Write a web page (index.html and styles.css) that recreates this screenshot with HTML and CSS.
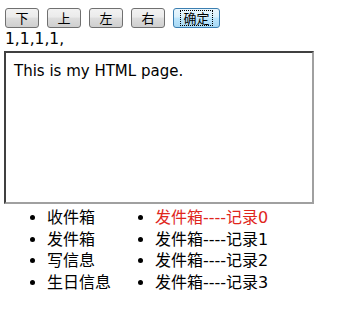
FILE: index.html
```html
<!DOCTYPE html>
<html lang="zh">
<head>
    <meta charset="UTF-8">
    <title>My HTML page</title>
    <link rel="stylesheet" href="styles.css">
</head>
<body>
    <div class="toolbar">
        <button class="btn">下</button>
        <button class="btn">上</button>
        <button class="btn">左</button>
        <button class="btn">右</button>
        <button class="btn btn-ok"><span>确定</span></button>
    </div>
    <div class="output">1,1,1,1,</div>
    <div class="content">This is my HTML page.</div>
    <div class="lists">
        <ul class="menu">
            <li>收件箱</li>
            <li>发件箱</li>
            <li>写信息</li>
            <li>生日信息</li>
        </ul>
        <ul class="records">
            <li><span class="active">发件箱----记录0</span></li>
            <li>发件箱----记录1</li>
            <li>发件箱----记录2</li>
            <li>发件箱----记录3</li>
        </ul>
    </div>
</body>
</html>
```

FILE: styles.css
```css
body {
    margin: 0;
    padding: 8px 4px;
    font-family: "DejaVu Sans", "Noto Sans CJK SC", sans-serif;
    font-size: 15px;
    color: #000;
    background: #fff;
}
.toolbar {
    display: flex;
    gap: 8px;
    padding-left: 1px;
}
.btn {
    width: 34px;
    height: 20px;
    padding: 0;
    border: 1px solid #707070;
    border-radius: 3px;
    background: linear-gradient(#f2f2f2, #ebebeb 45%, #dddddd 50%, #cfcfcf);
    font-family: "Noto Sans CJK SC", sans-serif;
    font-size: 13px;
    line-height: 16px;
    color: #000;
}
.btn-ok {
    width: 47px;
    border-color: #3c7fb1;
    background: linear-gradient(#eaf6fd, #d9f0fc 45%, #bee6fd 50%, #a7d9f5);
}
.btn-ok span {
    display: inline-block;
    padding: 0 2px;
    outline: 1px dotted #000;
    line-height: 14px;
}
.output {
    padding-left: 1px;
    height: 21px;
    line-height: 22px;
    font-size: 15.5px;
}
.content {
    width: 290px;
    height: 139px;
    margin-top: 2px;
    padding: 3px 8px 7px;
    border: 2px solid;
    border-color: #404040 #a0a0a0 #a0a0a0 #404040;
    line-height: 30px;
}
.lists {
    display: flex;
    margin-top: 3px;
}
.lists ul {
    margin: 0;
    padding-left: 43px;
    line-height: 21.5px;
    font-size: 16px;
}
.lists ul.records {
    padding-left: 44px;
}
.active {
    color: #e0261c;
}
```
